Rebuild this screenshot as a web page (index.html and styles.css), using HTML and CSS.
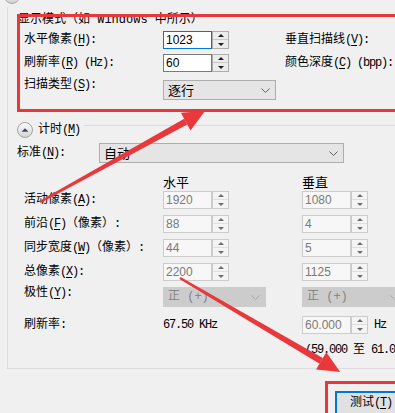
FILE: index.html
```html
<!DOCTYPE html>
<html lang="zh-CN">
<head>
    <meta charset="UTF-8">
    <title>自定义分辨率</title>
    <link rel="stylesheet" href="styles.css">
</head>
<body>
    <div class="prev-toggle">
        <svg width="16" height="16" viewBox="0 0 16 16"><defs><linearGradient id="g1" x1="0" y1="0" x2="0" y2="1"><stop offset="0" stop-color="#ffffff"/><stop offset="1" stop-color="#cfcfcf"/></linearGradient></defs><circle cx="8" cy="8" r="7.5" fill="url(#g1)" stroke="#a8a8a8"/></svg>
    </div>

    <div class="frame">
        <div class="mode">
            <div class="legend">显示模式（如 Windows 中所示）</div>
            <div class="mrow">
                <div class="label">水平像素<span class="en">(<u>H</u>):</span></div>
                <div class="spin"><div class="field focus">1023</div><div class="spinner"><i class="up"></i><i class="down"></i></div></div>
                <div class="label">垂直扫描线<span class="en">(<u>V</u>):</span></div>
            </div>
            <div class="mrow">
                <div class="label">刷新率<span class="en">(<u>R</u>) (Hz):</span></div>
                <div class="spin"><div class="field">60</div><div class="spinner"><i class="up"></i><i class="down"></i></div></div>
                <div class="label">颜色深度<span class="en">(<u>C</u>) (bpp):</span></div>
            </div>
            <div class="mrow scan">
                <div class="label">扫描类型<span class="en">(<u>S</u>):</span></div>
                <div class="combo scan-combo"><span>逐行</span><svg width="9" height="5" viewBox="0 0 9 5"><path d="M0.5 0.5 L4.5 4.5 L8.5 0.5" fill="none" stroke="#606060"/></svg></div>
            </div>
        </div>

        <div class="timing">
            <div class="expander">
                <svg width="16" height="16" viewBox="0 0 16 16"><defs><linearGradient id="g2" x1="0" y1="0" x2="0" y2="1"><stop offset="0" stop-color="#ffffff"/><stop offset="1" stop-color="#d2d2d2"/></linearGradient></defs><circle cx="8" cy="8" r="7.5" fill="url(#g2)" stroke="#a4a4a4"/><path d="M4.5 9.8 L8 6.2 L11.5 9.8 Z" fill="#3a4866"/></svg>
                <span>计时<span class="en">(<u>M</u>)</span></span>
            </div>

            <div class="std">
                <div class="label">标准<span class="en">(<u>N</u>):</span></div>
                <div class="combo std-combo"><span>自动</span><svg width="9" height="5" viewBox="0 0 9 5"><path d="M0.5 0.5 L4.5 4.5 L8.5 0.5" fill="none" stroke="#606060"/></svg></div>
            </div>

            <div class="heads">
                <div></div>
                <div>水平</div>
                <div>垂直</div>
            </div>

            <div class="trow">
                <div class="label">活动像素<span class="en">(<u>A</u>):</span></div>
                <div class="spin off"><div class="field">1920</div><div class="spinner"><i class="up"></i><i class="down"></i></div></div>
                <div class="spin off"><div class="field">1080</div><div class="spinner"><i class="up"></i><i class="down"></i></div></div>
            </div>
            <div class="trow">
                <div class="label">前沿<span class="en">(<u>F</u>)</span>（像素）<span class="en">:</span></div>
                <div class="spin off"><div class="field">88</div><div class="spinner"><i class="up"></i><i class="down"></i></div></div>
                <div class="spin off"><div class="field">4</div><div class="spinner"><i class="up"></i><i class="down"></i></div></div>
            </div>
            <div class="trow">
                <div class="label">同步宽度<span class="en">(<u>W</u>)</span>（像素）<span class="en">:</span></div>
                <div class="spin off"><div class="field">44</div><div class="spinner"><i class="up"></i><i class="down"></i></div></div>
                <div class="spin off"><div class="field">5</div><div class="spinner"><i class="up"></i><i class="down"></i></div></div>
            </div>
            <div class="trow">
                <div class="label">总像素<span class="en">(<u>X</u>):</span></div>
                <div class="spin off"><div class="field">2200</div><div class="spinner"><i class="up"></i><i class="down"></i></div></div>
                <div class="spin off"><div class="field">1125</div><div class="spinner"><i class="up"></i><i class="down"></i></div></div>
            </div>
            <div class="trow pol">
                <div class="label">极性<span class="en">(<u>Y</u>):</span></div>
                <div class="combo off"><span>正 (+)</span><svg width="9" height="5" viewBox="0 0 9 5"><path d="M0.5 0.5 L4.5 4.5 L8.5 0.5" fill="none" stroke="#a8a8a8"/></svg></div>
                <div class="combo off"><span>正 (+)</span><svg width="9" height="5" viewBox="0 0 9 5"><path d="M0.5 0.5 L4.5 4.5 L8.5 0.5" fill="none" stroke="#a8a8a8"/></svg></div>
            </div>
            <div class="trow rate">
                <div class="label">刷新率<span class="en">:</span></div>
                <div class="en">67.50 KHz</div>
                <div class="rate-cell">
                    <div class="spin off"><div class="field">60.000</div><div class="spinner"><i class="up"></i><i class="down"></i></div></div>
                    <span class="en">Hz</span>
                </div>
            </div>
            <div class="trow range">
                <div></div>
                <div></div>
                <div class="range-text"><span class="en">(59.000 </span>至<span class="en"> 61.0</span></div>
            </div>
        </div>
    </div>

    <div class="actions">
        <div class="btn">测试<span class="en">(<u>T</u>)</span></div>
    </div>

    <svg class="marks" width="395" height="413" viewBox="0 0 395 413">
        <rect x="18.5" y="15.5" width="400" height="95" fill="none" stroke="#e8383c" stroke-width="3"/>
        <rect x="326.5" y="382.5" width="100" height="50" fill="none" stroke="#e8383c" stroke-width="3"/>
        <polygon points="40.6,203.1 187.2,124.4 184.2,118.8 39.4,200.9" fill="#e8383c"/>
        <polygon points="205,111 190.5,130.4 180.9,112.8" fill="#e8383c"/>
        <polygon points="179.4,279 319.6,363.7 322.8,358.1 180.6,277" fill="#e8383c"/>
        <polygon points="340.2,372.1 316.1,369.5 326.3,352.3" fill="#e8383c"/>
    </svg>
</body>
</html>
```

FILE: styles.css
```css
* {
    box-sizing: border-box;
}
body {
    margin: 0;
    width: 395px;
    height: 413px;
    overflow: hidden;
    position: relative;
    background-color: #f0f0f0;
    color: #000;
    font-family: "Liberation Mono", "Noto Sans CJK SC", monospace;
    font-size: 12px;
    line-height: 16px;
}
u {
    text-decoration-thickness: 1px;
    text-underline-offset: 2px;
}
/* half-width latin runs, narrowed to the 6px cell of the dialog font */
.en {
    letter-spacing: -1.2px;
}
.prev-toggle {
    height: 7px;
    overflow: hidden;
    padding-left: 4px;
}
.prev-toggle svg {
    display: block;
    margin-top: -12px;
}
.frame {
    margin-left: 7px;
    border-left: 1px solid #dcdcdc;
    border-bottom: 1px solid #dcdcdc;
    padding-bottom: 11px;
}
.label, .legend, .en, .heads, .expander, .btn, .range-text {
    white-space: nowrap;
}

/* display mode section */
.mode {
    border-bottom: 1px solid #dcdcdc;
    padding-bottom: 25px;
}
.legend {
    height: 24px;
    line-height: 26px;
    padding-left: 10px;
}
.mrow {
    display: grid;
    grid-template-columns: 139px 122px 1fr;
    align-items: center;
    height: 18px;
    padding-left: 16px;
}
.mrow + .mrow {
    margin-top: 5px;
}
.mrow.scan {
    margin-top: 8px;
    height: 20px;
    align-items: start;
}
.mrow.scan .label {
    margin-top: -2px;
    line-height: 14px;
}

/* spin boxes */
.spin {
    display: flex;
    width: 66px;
    height: 18px;
}
.field {
    width: 49px;
    height: 18px;
    border: 1px solid #7a7a7a;
    background-color: #fff;
    padding-left: 2px;
    font-family: "Liberation Sans", sans-serif;
    font-size: 12px;
    line-height: 16px;
}
.field.focus {
    border-color: #0078d7;
}
.spinner {
    width: 17px;
    height: 18px;
    border: 1px solid #adadad;
    background-color: #ececec;
    display: grid;
    grid-template-rows: 1fr 1fr;
}
.spinner i {
    display: flex;
    align-items: center;
    justify-content: center;
}
.spinner .up {
    border-bottom: 1px solid #c9c9c9;
}
.spinner .up::after {
    content: "";
    border: 3px solid transparent;
    border-top-width: 0;
    border-bottom-color: #1e1e1e;
}
.spinner .down::after {
    content: "";
    border: 3px solid transparent;
    border-bottom-width: 0;
    border-top-color: #1e1e1e;
}
.spin.off .field {
    border-color: #cccccc;
    background-color: #f7f7f7;
    color: #7a7a7a;
}
.spin.off .spinner {
    border-color: #cccccc;
    background-color: #f4f4f4;
}
.spin.off .spinner .up {
    border-bottom-color: #dedede;
}
.spin.off .spinner .up::after {
    border-bottom-color: #6e6e6e;
}
.spin.off .spinner .down::after {
    border-top-color: #6e6e6e;
}

/* combo boxes */
.combo {
    display: flex;
    align-items: center;
    justify-content: space-between;
    height: 20px;
    border: 1px solid #adadad;
    background-color: #e5e5e5;
    padding: 0 5px 0 4px;
    font-family: "Noto Sans CJK SC", sans-serif;
    font-size: 13px;
}
.combo svg {
    display: block;
}
.scan-combo {
    width: 113px;
}
.std-combo {
    width: 245px;
}
.combo.off {
    width: 103px;
    background-color: #cccccc;
    border-color: #cccccc;
    color: #858585;
    font-family: "Liberation Mono", "Noto Sans CJK SC", monospace;
    font-size: 12px;
}

/* timing section */
.expander {
    display: flex;
    align-items: center;
    gap: 5px;
    width: fit-content;
    height: 16px;
    margin-top: -4px;
    padding-left: 9px;
    padding-right: 4px;
    background-color: #f0f0f0;
}
.expander svg {
    display: block;
}
.std {
    display: grid;
    grid-template-columns: 82px 245px;
    align-items: center;
    height: 20px;
    margin-top: 5px;
    padding-left: 9px;
}
.heads {
    display: grid;
    grid-template-columns: 139px 139px 1fr;
    height: 16px;
    margin-top: 11px;
    padding-left: 16px;
    font-family: "Noto Sans CJK SC", sans-serif;
    font-size: 13px;
}
.trow {
    display: grid;
    grid-template-columns: 139px 139px 1fr;
    align-items: center;
    height: 18px;
    margin-top: 6px;
    padding-left: 16px;
}
.heads + .trow {
    margin-top: 1px;
}
.trow.pol {
    height: 20px;
    align-items: start;
}
.trow.pol .label {
    margin-top: -1px;
    line-height: 14px;
}
.trow.rate {
    margin-top: 9px;
}
.trow.range {
    margin-top: 9px;
    height: 14px;
}
.rate-cell {
    display: flex;
    align-items: center;
    gap: 6px;
}
.range-text {
    padding-left: 3px;
    line-height: 14px;
}

/* bottom button */
.actions {
    margin-top: 22px;
    padding-left: 335px;
}
.btn {
    width: 80px;
    height: 24px;
    border: 1px solid #0078d7;
    box-shadow: inset 0 0 0 1px #0078d7;
    background-color: #e1e1e1;
    padding-left: 14px;
    line-height: 22px;
}

/* red annotations drawn over the dialog */
.marks {
    position: absolute;
    top: 0;
    left: 0;
    pointer-events: none;
}
```
